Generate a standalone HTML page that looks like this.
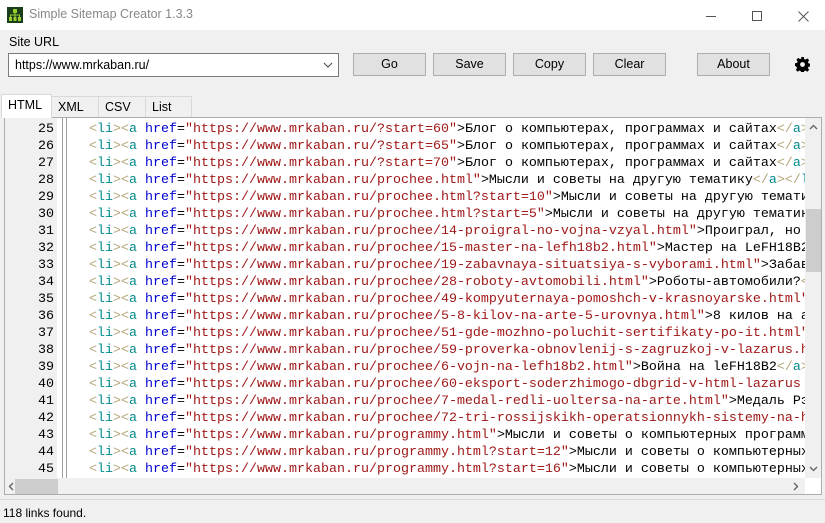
<!DOCTYPE html>
<html><head><meta charset="utf-8"><style>
*{margin:0;padding:0;box-sizing:border-box}
body{width:825px;height:523px;background:#f0f0f0;font-family:"Liberation Sans","Noto Sans CJK SC",sans-serif;font-size:12px;color:#000;position:relative;overflow:hidden}
.title{position:absolute;left:0;top:0;width:825px;height:30px;background:#fff}
.title .t{position:absolute;left:29px;top:7px;color:#888;font-size:12.5px}
.ctl{position:absolute;top:0;width:46px;height:30px;text-align:center;line-height:30px;color:#555;font-size:14px}
.abs{position:absolute}
.btn{position:absolute;top:53px;height:23px;border:1px solid #adadad;background:#e1e1e1;text-align:center;line-height:21px;font-size:12.5px}
.combo{position:absolute;left:8px;top:53px;width:331px;height:24px;background:#fff;border:1px solid #7a7a7a;padding-left:6px;line-height:22px;font-size:12.5px}
.tab{position:absolute;top:96px;height:21px;border:1px solid #d9d9d9;border-bottom:none;background:#f0f0f0;padding-left:6px;line-height:20px;font-size:12.5px}
.ed{position:absolute;left:4px;top:117px;width:818px;height:378px;border:1px solid #adadad;background:#fff;overflow:hidden}
.gut{position:absolute;left:0;top:0;width:52px;height:360px;background:#f0f0f0}
.gl{position:absolute;left:57px;top:0;width:5px;height:360px;border-left:1px solid #a0a0a0;border-right:1px solid #a0a0a0}
.nums{position:absolute;left:0;top:3px;width:49px;text-align:right;font-family:"Liberation Mono",monospace;font-size:13.33px;line-height:17px}
.code{position:absolute;left:84px;top:3px;width:716px;overflow:hidden;font-family:"Liberation Mono","Noto Sans CJK SC",monospace;font-size:13.33px;line-height:17px;white-space:pre}
.b{color:#b5a57a}.g{color:#008a8a}.h{color:#0000d0}.s{color:#a01818}
.vs{position:absolute;left:800px;top:0;width:17px;height:360px;background:#f0f0f0}
.hs{position:absolute;left:0;top:360px;width:800px;height:17px;background:#f0f0f0}
</style></head><body>
<div class="title">
<svg class="abs" style="left:7px;top:7px" width="16" height="16" viewBox="0 0 16 16"><rect width="16" height="16" fill="#1a3d1a"/><rect x="6" y="2" width="4" height="4" fill="#9acd32"/><rect x="2" y="10" width="3" height="4" fill="#9acd32"/><rect x="6.5" y="10" width="3" height="4" fill="#9acd32"/><rect x="11" y="10" width="3" height="4" fill="#9acd32"/><path d="M8 6v4M3.5 10V8h9v2" stroke="#9acd32" fill="none"/></svg>
<div class="t">Simple Sitemap Creator 1.3.3</div>
<div class="ctl" style="left:688px"><span style="display:inline-block;width:10px;height:1px;background:#555;vertical-align:middle"></span></div>
<div class="ctl" style="left:734px"><span style="display:inline-block;width:10px;height:10px;border:1px solid #555;vertical-align:middle"></span></div>
<div class="ctl" style="left:780px"><svg width="11" height="11" style="vertical-align:middle"><path d="M0.5 0.5l10 10M10.5 0.5l-10 10" stroke="#555"/></svg></div>
</div>
<div class="abs" style="left:9px;top:35px;font-size:12.5px">Site URL</div>
<div class="combo">https://www.mrkaban.ru/<svg class="abs" style="right:5px;top:8px" width="10" height="6"><path d="M1 1l4 4 4-4" stroke="#444" fill="none"/></svg></div>
<div class="btn" style="left:353px;width:73px">Go</div>
<div class="btn" style="left:433px;width:73px">Save</div>
<div class="btn" style="left:513px;width:73px">Copy</div>
<div class="btn" style="left:593px;width:73px">Clear</div>
<div class="btn" style="left:697px;width:73px">About</div>
<svg class="abs" style="left:795px;top:57px" width="15" height="15" viewBox="0 0 16 16"><path fill="#000" d="M6.6 0h2.8l.4 2.2 1.4.6 1.9-1.3 2 2-1.3 1.9.6 1.4 2.2.4v2.8l-2.2.4-.6 1.4 1.3 1.9-2 2-1.9-1.3-1.4.6-.4 2.2H6.6l-.4-2.2-1.4-.6-1.9 1.3-2-2 1.3-1.9-.6-1.4L0 9.4V6.6l2.2-.4.6-1.4-1.3-1.9 2-2 1.9 1.3 1.4-.6z"/><circle cx="8" cy="8" r="2.6" fill="#f0f0f0"/></svg>
<div class="tab" style="left:51px;width:48px">XML</div>
<div class="tab" style="left:98px;width:48px">CSV</div>
<div class="tab" style="left:145px;width:47px">List</div>
<div class="tab" style="left:1px;top:94px;width:51px;height:24px;background:#fff;z-index:2">HTML</div>
<div class="ed">
<div class="gut"></div><div class="gl"></div>
<div class="nums">25<br>26<br>27<br>28<br>29<br>30<br>31<br>32<br>33<br>34<br>35<br>36<br>37<br>38<br>39<br>40<br>41<br>42<br>43<br>44<br>45</div>
<div class="code"><span class="b">&lt;</span><span class="g">li</span><span class="b">&gt;&lt;</span><span class="g">a</span> <span class="h">href</span>=<span class="s">"https://www.mrkaban.ru/?start=60"</span>&gt;Блог о компьютерах, программах и сайтах<span class="b">&lt;/</span><span class="g">a</span><span class="b">&gt;</span>
<span class="b">&lt;</span><span class="g">li</span><span class="b">&gt;&lt;</span><span class="g">a</span> <span class="h">href</span>=<span class="s">"https://www.mrkaban.ru/?start=65"</span>&gt;Блог о компьютерах, программах и сайтах<span class="b">&lt;/</span><span class="g">a</span><span class="b">&gt;</span>
<span class="b">&lt;</span><span class="g">li</span><span class="b">&gt;&lt;</span><span class="g">a</span> <span class="h">href</span>=<span class="s">"https://www.mrkaban.ru/?start=70"</span>&gt;Блог о компьютерах, программах и сайтах<span class="b">&lt;/</span><span class="g">a</span><span class="b">&gt;</span>
<span class="b">&lt;</span><span class="g">li</span><span class="b">&gt;&lt;</span><span class="g">a</span> <span class="h">href</span>=<span class="s">"https://www.mrkaban.ru/prochee.html"</span>&gt;Мысли и советы на другую тематику<span class="b">&lt;/</span><span class="g">a</span><span class="b">&gt;&lt;/</span><span class="g">li</span>
<span class="b">&lt;</span><span class="g">li</span><span class="b">&gt;&lt;</span><span class="g">a</span> <span class="h">href</span>=<span class="s">"https://www.mrkaban.ru/prochee.html?start=10"</span>&gt;Мысли и советы на другую тематику
<span class="b">&lt;</span><span class="g">li</span><span class="b">&gt;&lt;</span><span class="g">a</span> <span class="h">href</span>=<span class="s">"https://www.mrkaban.ru/prochee.html?start=5"</span>&gt;Мысли и советы на другую тематику
<span class="b">&lt;</span><span class="g">li</span><span class="b">&gt;&lt;</span><span class="g">a</span> <span class="h">href</span>=<span class="s">"https://www.mrkaban.ru/prochee/14-proigral-no-vojna-vzyal.html"</span>&gt;Проиграл, но взял
<span class="b">&lt;</span><span class="g">li</span><span class="b">&gt;&lt;</span><span class="g">a</span> <span class="h">href</span>=<span class="s">"https://www.mrkaban.ru/prochee/15-master-na-lefh18b2.html"</span>&gt;Мастер на LeFH18B2
<span class="b">&lt;</span><span class="g">li</span><span class="b">&gt;&lt;</span><span class="g">a</span> <span class="h">href</span>=<span class="s">"https://www.mrkaban.ru/prochee/19-zabavnaya-situatsiya-s-vyborami.html"</span>&gt;Забавная
<span class="b">&lt;</span><span class="g">li</span><span class="b">&gt;&lt;</span><span class="g">a</span> <span class="h">href</span>=<span class="s">"https://www.mrkaban.ru/prochee/28-roboty-avtomobili.html"</span>&gt;Роботы-автомобили?<span class="b">&lt;/</span>
<span class="b">&lt;</span><span class="g">li</span><span class="b">&gt;&lt;</span><span class="g">a</span> <span class="h">href</span>=<span class="s">"https://www.mrkaban.ru/prochee/49-kompyuternaya-pomoshch-v-krasnoyarske.html"</span>
<span class="b">&lt;</span><span class="g">li</span><span class="b">&gt;&lt;</span><span class="g">a</span> <span class="h">href</span>=<span class="s">"https://www.mrkaban.ru/prochee/5-8-kilov-na-arte-5-urovnya.html"</span>&gt;8 килов на арте
<span class="b">&lt;</span><span class="g">li</span><span class="b">&gt;&lt;</span><span class="g">a</span> <span class="h">href</span>=<span class="s">"https://www.mrkaban.ru/prochee/51-gde-mozhno-poluchit-sertifikaty-po-it.html"</span>
<span class="b">&lt;</span><span class="g">li</span><span class="b">&gt;&lt;</span><span class="g">a</span> <span class="h">href</span>=<span class="s">"https://www.mrkaban.ru/prochee/59-proverka-obnovlenij-s-zagruzkoj-v-lazarus.html"</span>
<span class="b">&lt;</span><span class="g">li</span><span class="b">&gt;&lt;</span><span class="g">a</span> <span class="h">href</span>=<span class="s">"https://www.mrkaban.ru/prochee/6-vojn-na-lefh18b2.html"</span>&gt;Война на leFH18B2<span class="b">&lt;/</span><span class="g">a</span><span class="b">&gt;</span>
<span class="b">&lt;</span><span class="g">li</span><span class="b">&gt;&lt;</span><span class="g">a</span> <span class="h">href</span>=<span class="s">"https://www.mrkaban.ru/prochee/60-eksport-soderzhimogo-dbgrid-v-html-lazarus</span>
<span class="b">&lt;</span><span class="g">li</span><span class="b">&gt;&lt;</span><span class="g">a</span> <span class="h">href</span>=<span class="s">"https://www.mrkaban.ru/prochee/7-medal-redli-uoltersa-na-arte.html"</span>&gt;Медаль Рэдли
<span class="b">&lt;</span><span class="g">li</span><span class="b">&gt;&lt;</span><span class="g">a</span> <span class="h">href</span>=<span class="s">"https://www.mrkaban.ru/prochee/72-tri-rossijskikh-operatsionnykh-sistemy-na-html</span>
<span class="b">&lt;</span><span class="g">li</span><span class="b">&gt;&lt;</span><span class="g">a</span> <span class="h">href</span>=<span class="s">"https://www.mrkaban.ru/programmy.html"</span>&gt;Мысли и советы о компьютерных программах
<span class="b">&lt;</span><span class="g">li</span><span class="b">&gt;&lt;</span><span class="g">a</span> <span class="h">href</span>=<span class="s">"https://www.mrkaban.ru/programmy.html?start=12"</span>&gt;Мысли и советы о компьютерных
<span class="b">&lt;</span><span class="g">li</span><span class="b">&gt;&lt;</span><span class="g">a</span> <span class="h">href</span>=<span class="s">"https://www.mrkaban.ru/programmy.html?start=16"</span>&gt;Мысли и советы о компьютерных</div>
<div class="vs"><div class="abs" style="left:1px;top:91px;width:15px;height:63px;background:#cdcdcd"></div>
<svg class="abs" style="left:4px;top:6px" width="9" height="6"><path d="M1 5l3.5-3.5L8 5" stroke="#606060" fill="none" stroke-width="1.3"/></svg>
<svg class="abs" style="left:4px;top:348px" width="9" height="6"><path d="M1 1l3.5 3.5L8 1" stroke="#606060" fill="none" stroke-width="1.3"/></svg></div>
<div class="hs"><div class="abs" style="left:10px;top:1px;width:43px;height:15px;background:#cdcdcd"></div>
<svg class="abs" style="left:3px;top:4px" width="6" height="9"><path d="M5 1L1.5 4.5 5 8" stroke="#606060" fill="none" stroke-width="1.3"/></svg>
<svg class="abs" style="left:788px;top:4px" width="6" height="9"><path d="M1 1l3.5 3.5L1 8" stroke="#606060" fill="none" stroke-width="1.3"/></svg></div>
</div>
<div class="abs" style="left:0;top:499px;width:825px;height:1px;background:#d9d9d9"></div>
<div class="abs" style="left:3px;top:506px;font-size:12px">118 links found.</div>
</body></html>
